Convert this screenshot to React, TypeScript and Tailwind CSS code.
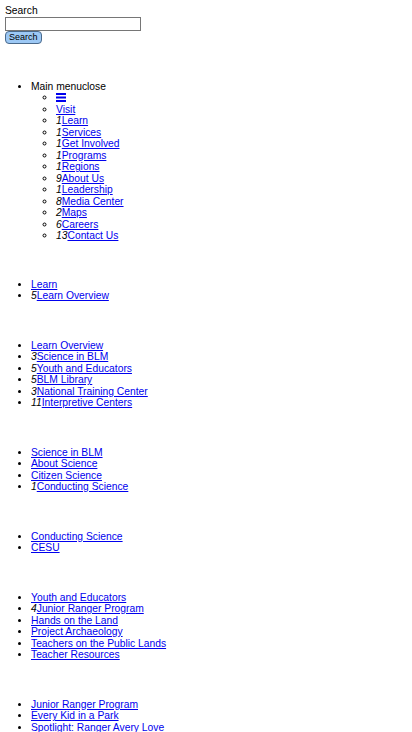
const mainMenu: [string, string][] = [
  ['', 'Visit'],
  ['1', 'Learn'],
  ['1', 'Services'],
  ['1', 'Get Involved'],
  ['1', 'Programs'],
  ['1', 'Regions'],
  ['9', 'About Us'],
  ['1', 'Leadership'],
  ['8', 'Media Center'],
  ['2', 'Maps'],
  ['6', 'Careers'],
  ['13', 'Contact Us'],
];

const subMenus: [string, string][][] = [
  [['', 'Learn'], ['5', 'Learn Overview']],
  [
    ['', 'Learn Overview'],
    ['3', 'Science in BLM'],
    ['5', 'Youth and Educators'],
    ['5', 'BLM Library'],
    ['3', 'National Training Center'],
    ['11', 'Interpretive Centers'],
  ],
  [
    ['', 'Science in BLM'],
    ['', 'About Science'],
    ['', 'Citizen Science'],
    ['1', 'Conducting Science'],
  ],
  [['', 'Conducting Science'], ['', 'CESU']],
  [
    ['', 'Youth and Educators'],
    ['4', 'Junior Ranger Program'],
    ['', 'Hands on the Land'],
    ['', 'Project Archaeology'],
    ['', 'Teachers on the Public Lands'],
    ['', 'Teacher Resources'],
  ],
  [
    ['', 'Junior Ranger Program'],
    ['', 'Every Kid in a Park'],
    ['', 'Spotlight: Ranger Avery Love'],
  ],
];

function Item({ count, label }: { count: string; label: string }) {
  return (
    <li>
      {count && <i>{count}</i>}
      <a href="#" className="text-[#0000ee] underline">
        {label}
      </a>
    </li>
  );
}

export default function App() {
  return (
    <div className="min-h-[732px] bg-white p-[5px] font-['Liberation_Sans',Arial,sans-serif] text-[10.3px] leading-[11.5px] text-black">
      <form onSubmit={(e) => e.preventDefault()}>
        <label className="block">Search</label>
        <input
          type="text"
          className="block h-[14px] w-[136px] border border-[#767676] bg-white"
        />
        <button
          type="submit"
          className="block h-[13px] rounded-[4px] border border-[#4a6a8c] bg-[#9cc8f5] px-[3px] text-[9px] leading-[11px] text-black"
        >
          Search
        </button>
      </form>

      <ul className="mt-[37px] list-disc pl-[26px]">
        <li>
          Main menuclose
          <ul className="list-[circle] pl-[25px]">
            <li>
              <a href="#" className="inline-block align-[-1px] text-[#0000ee]" aria-label="menu">
                <svg width="10" height="9" viewBox="0 0 10 9" fill="currentColor">
                  <rect x="0" y="0" width="10" height="2" />
                  <rect x="0" y="3.5" width="10" height="2" />
                  <rect x="0" y="7" width="10" height="2" />
                </svg>
              </a>
            </li>
            {mainMenu.map(([count, label]) => (
              <Item key={label} count={count} label={label} />
            ))}
          </ul>
        </li>
      </ul>

      {subMenus.map((menu, i) => (
        <ul
          key={i}
          className={`${i === 0 ? 'mt-[37px]' : 'mt-[38px]'} list-disc pl-[26px]`}
        >
          {menu.map(([count, label]) => (
            <Item key={label} count={count} label={label} />
          ))}
        </ul>
      ))}
    </div>
  );
}
